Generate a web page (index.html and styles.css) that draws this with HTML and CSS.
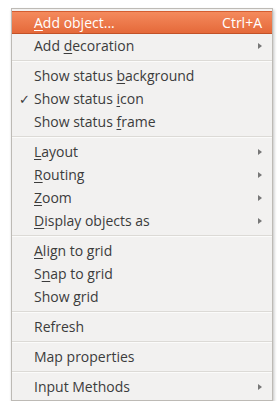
FILE: index.html
```html
<!DOCTYPE html>
<html lang="en">
<head>
    <meta charset="UTF-8">
    <title>Map context menu</title>
    <link rel="stylesheet" href="styles.css">
</head>
<body>
    <div class="menu">
        <div class="item active"><span class="label"><u>A</u>dd object...</span><span class="accel">Ctrl+A</span></div>
        <div class="item"><span class="label">Add <u>d</u>ecoration</span><span class="arrow"></span></div>
        <div class="sep"></div>
        <div class="item"><span class="label">Show status <u>b</u>ackground</span></div>
        <div class="item"><span class="check">&#10003;</span><span class="label">Show status <u>i</u>con</span></div>
        <div class="item"><span class="label">Show status <u>f</u>rame</span></div>
        <div class="sep"></div>
        <div class="item"><span class="label"><u>L</u>ayout</span><span class="arrow"></span></div>
        <div class="item"><span class="label"><u>R</u>outing</span><span class="arrow"></span></div>
        <div class="item"><span class="label"><u>Z</u>oom</span><span class="arrow"></span></div>
        <div class="item"><span class="label"><u>D</u>isplay objects as</span><span class="arrow"></span></div>
        <div class="sep"></div>
        <div class="item"><span class="label"><u>A</u>lign to grid</span></div>
        <div class="item"><span class="label">S<u>n</u>ap to grid</span></div>
        <div class="item"><span class="label">Show grid</span></div>
        <div class="sep"></div>
        <div class="item"><span class="label">Refresh</span></div>
        <div class="sep"></div>
        <div class="item"><span class="label">Map properties</span></div>
        <div class="sep"></div>
        <div class="item"><span class="label">Input Methods</span><span class="arrow"></span></div>
    </div>
</body>
</html>
```

FILE: styles.css
```css
body {
    margin: 0;
    padding: 8px 0 0 11px;
    background-color: #fff;
    font-family: "Open Sans", "DejaVu Sans", sans-serif;
}

.menu {
    width: 260px;
    padding: 2px 0;
    background-color: #f2f1f0;
    border: 1px solid #bdbab5;
    box-shadow: 1px 2px 3px rgba(0, 0, 0, 0.25);
    color: #3c3c3c;
    font-size: 14px;
}

.item {
    position: relative;
    display: flex;
    align-items: center;
    height: 23px;
    padding: 0 10px 0 22px;
    box-sizing: border-box;
}

.item u {
    text-decoration: underline;
    text-underline-offset: 2px;
}

.item.active {
    background: linear-gradient(#f48a5d, #e5693a);
    border-top: 1px solid #d45d31;
    border-bottom: 1px solid #c25228;
    color: #fff;
}

.label {
    flex: 1;
}

.accel {
    color: #fff;
}

.check {
    position: absolute;
    left: 7px;
    font-size: 13px;
}

.arrow {
    width: 0;
    height: 0;
    border-top: 3px solid transparent;
    border-bottom: 3px solid transparent;
    border-left: 4px solid #777;
}

.sep {
    height: 1px;
    margin: 3px 0 2px;
    background-color: #dcdad6;
    border-bottom: 1px solid #fbfbfa;
}
```
